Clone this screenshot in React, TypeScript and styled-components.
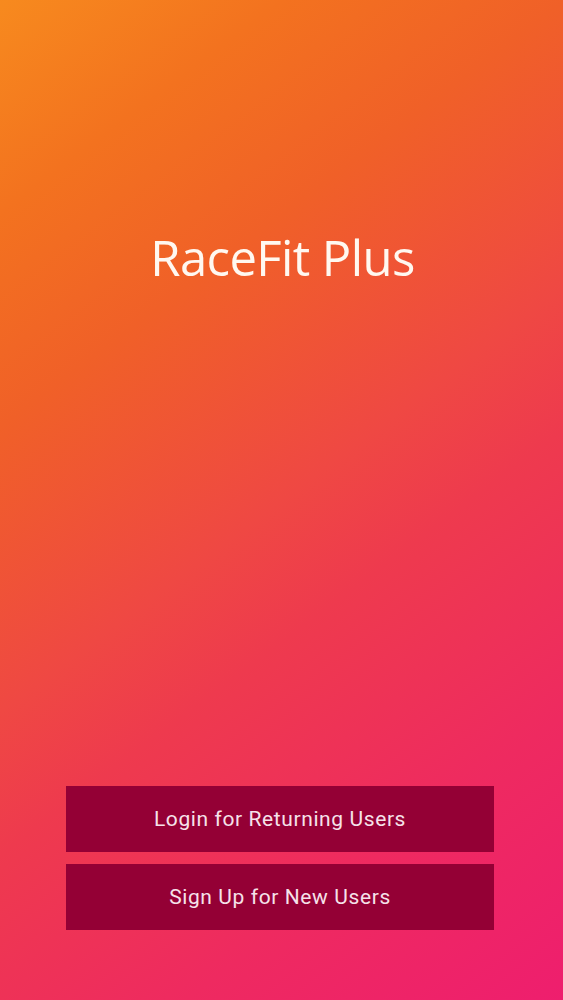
import styled, { createGlobalStyle } from 'styled-components'

const GlobalStyle = createGlobalStyle`
  html, body {
    margin: 0;
    padding: 0;
  }
  * {
    box-sizing: border-box;
  }
`

const Screen = styled.div`
  display: flex;
  flex-direction: column;
  align-items: center;
  width: 100%;
  height: 1000px;
  padding: 0 69px 70px 66px;
  background: linear-gradient(143deg, #f78a1e 0%, #f3721f 15%, #f06028 30%, #ef4843 50%, #ee3a4e 60%, #ee2a60 80%, #ee1e6e 100%);
`

const Title = styled.h1`
  margin: 222px 0 0;
  padding-left: 5px;
  font-family: 'Open Sans', sans-serif;
  font-weight: 400;
  font-size: 49px;
  letter-spacing: -0.6px;
  line-height: 70px;
  color: #fff8f0;
`

const Spacer = styled.div`
  flex: 1;
`

const ButtonStack = styled.div`
  display: flex;
  flex-direction: column;
  gap: 12px;
  width: 100%;
`

const ActionButton = styled.button`
  display: flex;
  align-items: center;
  justify-content: center;
  height: 66px;
  width: 100%;
  border: none;
  background: #940035;
  color: #f6e2ea;
  font-family: Roboto, sans-serif;
  font-size: 21px;
  letter-spacing: 0.6px;
  cursor: pointer;
`

const App = () => {
  return <>
    <GlobalStyle />
    <Screen>
      <Title>RaceFit Plus</Title>
      <Spacer />
      <ButtonStack>
        <ActionButton>Login for Returning Users</ActionButton>
        <ActionButton>Sign Up for New Users</ActionButton>
      </ButtonStack>
    </Screen>
  </>
}

export default App
